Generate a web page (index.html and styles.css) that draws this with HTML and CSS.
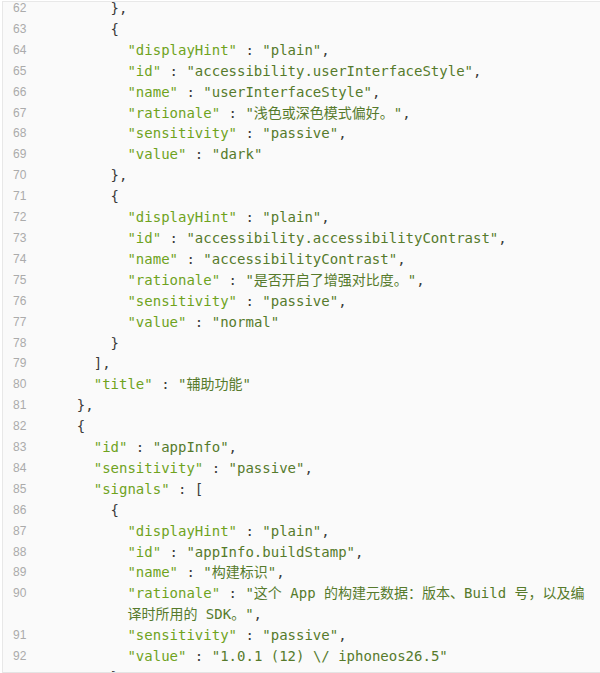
FILE: index.html
```html
<!DOCTYPE html>
<html lang="zh">
<head>
<meta charset="utf-8">
<title>JSON</title>
<link rel="stylesheet" href="styles.css">
</head>
<body>
<div class="frame">
<div class="lines">
<div class="ln"><span class="no">62</span><span class="code i6"><span class="p">},</span></span></div>
<div class="ln"><span class="no">63</span><span class="code i6"><span class="p">{</span></span></div>
<div class="ln"><span class="no">64</span><span class="code i8"><span class="k">"displayHint"</span><span class="p"> : </span><span class="v">"plain"</span><span class="p">,</span></span></div>
<div class="ln"><span class="no">65</span><span class="code i8"><span class="k">"id"</span><span class="p"> : </span><span class="v">"accessibility.userInterfaceStyle"</span><span class="p">,</span></span></div>
<div class="ln"><span class="no">66</span><span class="code i8"><span class="k">"name"</span><span class="p"> : </span><span class="v">"userInterfaceStyle"</span><span class="p">,</span></span></div>
<div class="ln"><span class="no">67</span><span class="code i8"><span class="k">"rationale"</span><span class="p"> : </span><span class="v">"浅色或深色模式偏好。"</span><span class="p">,</span></span></div>
<div class="ln"><span class="no">68</span><span class="code i8"><span class="k">"sensitivity"</span><span class="p"> : </span><span class="v">"passive"</span><span class="p">,</span></span></div>
<div class="ln"><span class="no">69</span><span class="code i8"><span class="k">"value"</span><span class="p"> : </span><span class="v">"dark"</span></span></div>
<div class="ln"><span class="no">70</span><span class="code i6"><span class="p">},</span></span></div>
<div class="ln"><span class="no">71</span><span class="code i6"><span class="p">{</span></span></div>
<div class="ln"><span class="no">72</span><span class="code i8"><span class="k">"displayHint"</span><span class="p"> : </span><span class="v">"plain"</span><span class="p">,</span></span></div>
<div class="ln"><span class="no">73</span><span class="code i8"><span class="k">"id"</span><span class="p"> : </span><span class="v">"accessibility.accessibilityContrast"</span><span class="p">,</span></span></div>
<div class="ln"><span class="no">74</span><span class="code i8"><span class="k">"name"</span><span class="p"> : </span><span class="v">"accessibilityContrast"</span><span class="p">,</span></span></div>
<div class="ln"><span class="no">75</span><span class="code i8"><span class="k">"rationale"</span><span class="p"> : </span><span class="v">"是否开启了增强对比度。"</span><span class="p">,</span></span></div>
<div class="ln"><span class="no">76</span><span class="code i8"><span class="k">"sensitivity"</span><span class="p"> : </span><span class="v">"passive"</span><span class="p">,</span></span></div>
<div class="ln"><span class="no">77</span><span class="code i8"><span class="k">"value"</span><span class="p"> : </span><span class="v">"normal"</span></span></div>
<div class="ln"><span class="no">78</span><span class="code i6"><span class="p">}</span></span></div>
<div class="ln"><span class="no">79</span><span class="code i4"><span class="p">],</span></span></div>
<div class="ln"><span class="no">80</span><span class="code i4"><span class="k">"title"</span><span class="p"> : </span><span class="v">"辅助功能"</span></span></div>
<div class="ln"><span class="no">81</span><span class="code i2"><span class="p">},</span></span></div>
<div class="ln"><span class="no">82</span><span class="code i2"><span class="p">{</span></span></div>
<div class="ln"><span class="no">83</span><span class="code i4"><span class="k">"id"</span><span class="p"> : </span><span class="v">"appInfo"</span><span class="p">,</span></span></div>
<div class="ln"><span class="no">84</span><span class="code i4"><span class="k">"sensitivity"</span><span class="p"> : </span><span class="v">"passive"</span><span class="p">,</span></span></div>
<div class="ln"><span class="no">85</span><span class="code i4"><span class="k">"signals"</span><span class="p"> : [</span></span></div>
<div class="ln"><span class="no">86</span><span class="code i6"><span class="p">{</span></span></div>
<div class="ln"><span class="no">87</span><span class="code i8"><span class="k">"displayHint"</span><span class="p"> : </span><span class="v">"plain"</span><span class="p">,</span></span></div>
<div class="ln"><span class="no">88</span><span class="code i8"><span class="k">"id"</span><span class="p"> : </span><span class="v">"appInfo.buildStamp"</span><span class="p">,</span></span></div>
<div class="ln"><span class="no">89</span><span class="code i8"><span class="k">"name"</span><span class="p"> : </span><span class="v">"构建标识"</span><span class="p">,</span></span></div>
<div class="ln"><span class="no">90</span><span class="code i8"><span class="k">"rationale"</span><span class="p"> : </span><span class="v">"这个 App 的构建元数据：版本、Build 号，以及编译时所用的 SDK。"</span><span class="p">,</span></span></div>
<div class="ln"><span class="no">91</span><span class="code i8"><span class="k">"sensitivity"</span><span class="p"> : </span><span class="v">"passive"</span><span class="p">,</span></span></div>
<div class="ln"><span class="no">92</span><span class="code i8"><span class="k">"value"</span><span class="p"> : </span><span class="v">"1.0.1 (12) \/ iphoneos26.5"</span></span></div>
<div class="ln"><span class="no">93</span><span class="code i6"><span class="p">},</span></span></div>
<div class="ln"><span class="no">94</span><span class="code i6"><span class="p">{</span></span></div>
</div>
</div>
</body>
</html>
```
FILE: styles.css
```css
html, body {
  margin: 0;
  padding: 0;
  background: #ffffff;
}

.frame {
  margin: 1px 0 0 2px;
  height: 670px;
  background: #fafafa;
  border-top: 1px solid #e8e8e8;
  border-left: 1px solid #e8e8e8;
  border-bottom: 1px solid #e4e4e4;
  overflow: hidden;
}

.lines {
  margin-top: -4px;
}

.ln {
  display: flex;
  align-items: flex-start;
  line-height: 20.9px;
}

.no {
  flex: 0 0 47px;
  padding-left: 10px;
  font-family: "Liberation Sans", Arial, sans-serif;
  font-size: 12px;
  color: #ababab;
}

.code {
  flex: 1 1 auto;
  min-width: 0;
  padding-right: 8px;
  font-family: "DejaVu Sans Mono", "Noto Sans CJK SC", monospace;
  font-size: 14px;
  white-space: pre-wrap;
  color: #3a3a3a;
}

.i2 { padding-left: 2ch; }
.i4 { padding-left: 4ch; }
.i6 { padding-left: 6ch; }
.i8 { padding-left: 8ch; }

.k { color: #6fa31d; }
.v { color: #567a2c; }
.p { color: #3a3a3a; }
```
